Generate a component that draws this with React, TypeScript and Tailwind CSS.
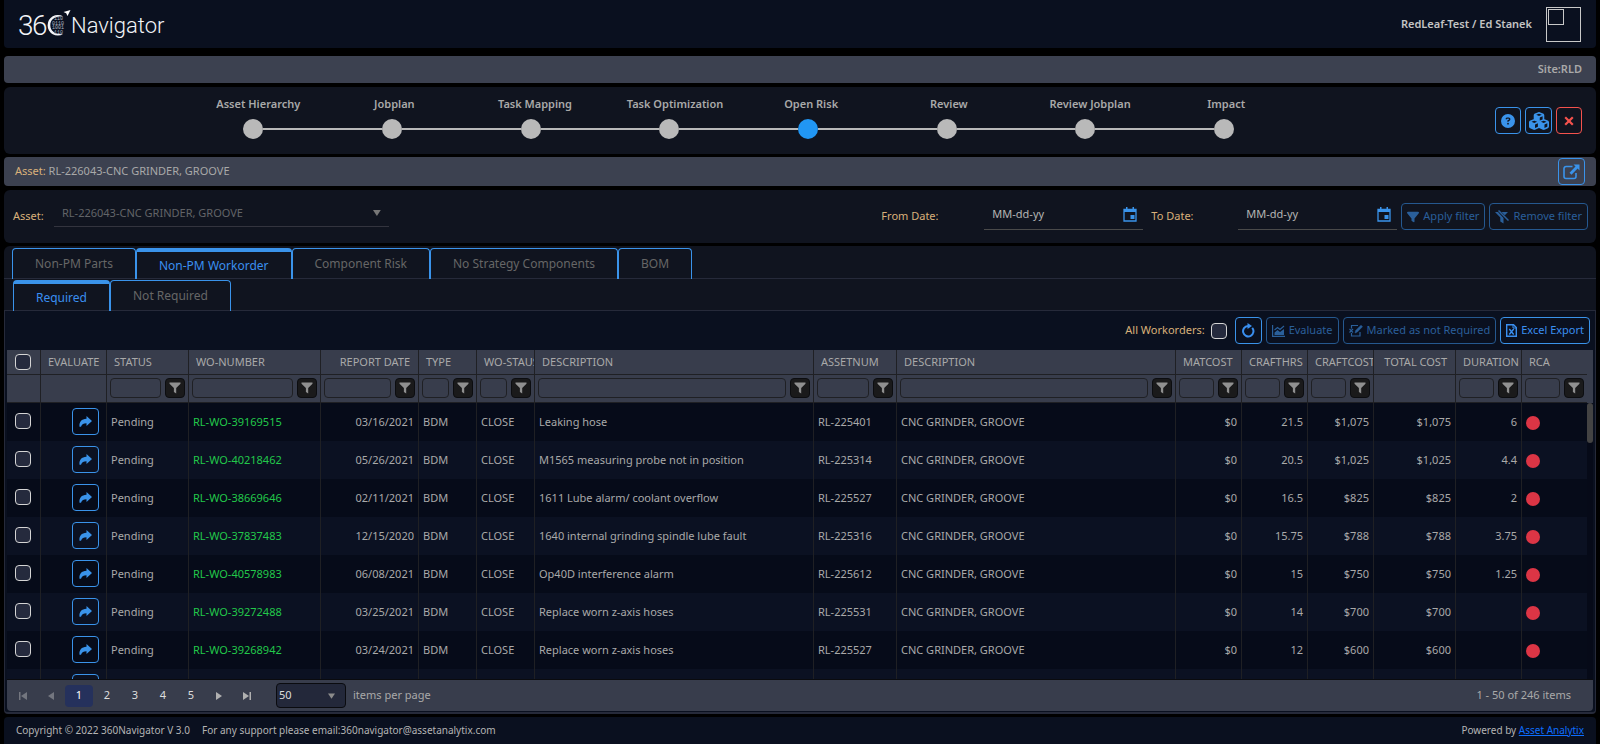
import type { ReactNode } from "react";
import { FaCircleQuestion, FaCubes, FaFilter } from "react-icons/fa6";

type Align = "left" | "right";
type Column = {
  title: string;
  width: string;
  align?: Align;
  filter?: boolean;
};

const columns: Column[] = [
  { title: "", width: "w-[33px]" },
  { title: "EVALUATE", width: "w-[66px]" },
  { title: "STATUS", width: "w-[82px]", filter: true },
  { title: "WO-NUMBER", width: "w-[132px]", filter: true },
  { title: "REPORT DATE", width: "w-[98px]", align: "right", filter: true },
  { title: "TYPE", width: "w-[58px]", filter: true },
  { title: "WO-STAUS", width: "w-[58px]", filter: true },
  { title: "DESCRIPTION", width: "", filter: true },
  { title: "ASSETNUM", width: "w-[83px]", filter: true },
  { title: "DESCRIPTION", width: "", filter: true },
  { title: "MATCOST", width: "w-[66px]", filter: true },
  { title: "CRAFTHRS", width: "w-[66px]", filter: true },
  { title: "CRAFTCOST", width: "w-[66px]", filter: true },
  { title: "TOTAL COST", width: "w-[82px]", align: "right" },
  { title: "DURATION", width: "w-[66px]", filter: true },
  { title: "RCA", width: "w-[66px]", filter: true },
];

const workorders = [
  ["RL-WO-39169515", "03/16/2021", "Leaking hose", "RL-225401", "21.5", "$1,075", "6"],
  ["RL-WO-40218462", "05/26/2021", "M1565 measuring probe not in position", "RL-225314", "20.5", "$1,025", "4.4"],
  ["RL-WO-38669646", "02/11/2021", "1611 Lube alarm/ coolant overflow", "RL-225527", "16.5", "$825", "2"],
  ["RL-WO-37837483", "12/15/2020", "1640 internal grinding spindle lube fault", "RL-225316", "15.75", "$788", "3.75"],
  ["RL-WO-40578983", "06/08/2021", "Op40D interference alarm", "RL-225612", "15", "$750", "1.25"],
  ["RL-WO-39272488", "03/25/2021", "Replace worn z-axis hoses", "RL-225531", "14", "$700", ""],
  ["RL-WO-39268942", "03/24/2021", "Replace worn z-axis hoses", "RL-225527", "12", "$600", ""],
  ["", "", "", "", "", "", ""],
];

const steps = [
  "Asset Hierarchy",
  "Jobplan",
  "Task Mapping",
  "Task Optimization",
  "Open Risk",
  "Review",
  "Review Jobplan",
  "Impact",
];

const checkboxClass =
  "block size-4 shrink-0 appearance-none rounded-[4px] border border-[#d4d4d4] bg-[#252a3d] checked:bg-[#3a93ea]";

function Logo() {
  return (
    <svg width="150" height="36" viewBox="0 0 150 36" role="img" aria-label="360 Navigator">
      <g fill="#f2f4f8" fontFamily="Roboto, sans-serif" fontWeight="300">
        <text x="0" y="29" fontSize="28">3</text>
        <text x="14" y="29" fontSize="28">6</text>
        <text x="53" y="27" fontSize="22">Navigator</text>
      </g>
      <path d="M45 10.300A10.300 10.300 0 1 0 45 28.200C37 28.500 32.300 25 32.300 19.200C32.300 13.500 37 9.800 45 10.300Z" fill="#f2f4f8" />
      <g fill="#b5bac4" fontFamily="Liberation Mono, monospace" fontSize="5">
        <text x="36" y="14">110</text>
        <text x="34" y="18.500">0110</text>
        <text x="34" y="23">1001</text>
        <text x="36" y="27.500">110</text>
      </g>
      <path d="M52.500 4L45.500 6L48.200 7.300L49.500 10Z" fill="#ffffff" />
    </svg>
  );
}

function CalendarIcon() {
  return (
    <svg width="14" height="15" viewBox="0 0 14 15" aria-hidden="true">
      <path d="M1 2.500h12v11.500H1z" fill="none" stroke="#3a93ea" strokeWidth="1.300" />
      <path d="M1 3h12v2H1zM3 0h1.500v3H3zM9.500 0H11v3H9.500zM7.500 8h4v4h-4z" fill="#3a93ea" />
    </svg>
  );
}

function FilterIcon() {
  return (
    <svg width="12" height="12" viewBox="0 0 12 12" aria-hidden="true">
      <path d="M0.500 0.500h11v1.300L7.200 6V11.500L4.900 10V6L0.500 1.800z" fill="currentColor" />
    </svg>
  );
}

function FilterOffIcon() {
  return (
    <svg width="14" height="14" viewBox="0 0 14 14" aria-hidden="true">
      <path d="M0 2h3l5.500 6v5.500L5.300 11.500V7.500zM6.500 2H13L9.800 5.200z" fill="currentColor" />
      <path d="M3.500 0.500L13.500 10.500" stroke="currentColor" strokeWidth="1.500" />
    </svg>
  );
}

function RefreshIcon() {
  return (
    <svg width="14" height="15" viewBox="0 0 14 15" aria-hidden="true">
      <path d="M11.200 4.800A5.200 5.200 0 1 1 7 3" fill="none" stroke="currentColor" strokeWidth="2" />
      <path d="M6.500 0L11 3L6.500 6z" fill="currentColor" />
    </svg>
  );
}

function ShareIcon() {
  return (
    <svg width="13" height="11" viewBox="0 0 13 11" aria-hidden="true">
      <path d="M7.500 0L13 5L7.500 10V7.200C4.500 7.200 3 8 2 10.800H0.500C0 6 2.500 3 7.500 2.800z" fill="currentColor" />
    </svg>
  );
}

function CloseIcon() {
  return (
    <svg width="10" height="10" viewBox="0 0 10 10" aria-hidden="true">
      <path d="M1.200 1.200L8.800 8.800M8.800 1.200L1.200 8.800" stroke="currentColor" strokeWidth="2.200" />
    </svg>
  );
}

function ChartIcon() {
  return (
    <svg width="13" height="12" viewBox="0 0 13 12" aria-hidden="true">
      <path d="M0.600 0V11.400H13" fill="none" stroke="currentColor" strokeWidth="1.200" />
      <path d="M2.500 10V7.500L5.500 5L8 7L12 4V10z" fill="currentColor" />
      <path d="M2.500 5L5.500 2.500L8 4.500L12 1" fill="none" stroke="currentColor" strokeWidth="1.200" />
    </svg>
  );
}

function MarkIcon() {
  return (
    <svg width="14" height="13" viewBox="0 0 14 13" fill="none" stroke="currentColor" aria-hidden="true">
      <path d="M2.500 4.500V1.500H9M2.500 9v3h8.500V8" strokeWidth="1.200" />
      <path d="M0.500 5L4 8.500M4 5L0.500 8.500" strokeWidth="1.200" />
      <path d="M6 9l0.700-2.500L12 1.200l1.500 1.500L8.300 8z" fill="currentColor" strokeWidth="0.500" />
    </svg>
  );
}

function ExcelIcon() {
  return (
    <svg width="11" height="13" viewBox="0 0 11 13" fill="none" stroke="currentColor" aria-hidden="true">
      <path d="M0.700 0.700H7.500L10.300 3.500V12.300H0.700z" strokeWidth="1.400" />
      <path d="M7 0.700V4H10.300" strokeWidth="1" />
      <path d="M3.300 5L7.700 10.500M7.700 5L3.300 10.500" strokeWidth="1.400" />
    </svg>
  );
}

function OpenIcon() {
  return (
    <svg width="17" height="16" viewBox="0 0 17 16" aria-hidden="true">
      <path d="M9.500 2.500H3A2 2 0 0 0 1 4.500V12.500A2 2 0 0 0 3 14.500H11A2 2 0 0 0 13 12.500V9" fill="none" stroke="#3a93ea" strokeWidth="1.600" />
      <path d="M10.500 0.500H16.500V6.500L14.600 4.600L8.500 10.700L6.500 8.700L12.500 2.500z" fill="#3a93ea" />
    </svg>
  );
}

function OutlineButton({ children, disabled = false }: { children: ReactNode; disabled?: boolean }) {
  return (
    <button
      type="button"
      disabled={disabled}
      className="flex h-[27px] items-center gap-1 rounded border border-[#3a93ea] px-[5px] text-[#3a8ff0] disabled:border-[#25588f] disabled:text-[#2a5f9a]"
    >
      {children}
    </button>
  );
}

function Tab({ label, active = false }: { label: string; active?: boolean }) {
  return (
    <button
      type="button"
      role="tab"
      aria-selected={active}
      className={
        active
          ? "h-[31px] rounded-t border-x border-t-4 border-[#3a93ea] px-[22px] text-xs text-[#3a8ff0]"
          : "h-[31px] rounded-t border-x border-t border-[#3a93ea] px-[22px] text-xs text-[#666666]"
      }
    >
      {label}
    </button>
  );
}

function DateField({ label, id }: { label: string; id: string }) {
  return (
    <div className="flex items-center">
      <label htmlFor={id} className="w-[103px] text-[#d9b07a]">
        {label}
      </label>
      <div className="mb-1 flex h-[30px] w-[159px] items-center border-b border-[#4a4a4a] pr-1.5 pl-2">
        <input
          id={id}
          type="text"
          placeholder="MM-dd-yy"
          className="w-full min-w-0 bg-transparent text-[11px] outline-none placeholder:text-[#b4b4b4]"
        />
        <button type="button" aria-label="Open calendar">
          <CalendarIcon />
        </button>
      </div>
    </div>
  );
}

function Columns() {
  return (
    <colgroup>
      {columns.map((c, i) => (
        <col key={i} className={c.width} />
      ))}
    </colgroup>
  );
}

function PagerIcon({ d }: { d: string }) {
  return (
    <svg width="10" height="10" viewBox="0 0 10 10" fill="currentColor" aria-hidden="true">
      <path d={d} />
    </svg>
  );
}

const cell = "overflow-hidden border-l border-[#1f2024] px-1 whitespace-nowrap";

export default function App() {
  return (
    <div className="flex h-screen min-h-[480px] flex-col bg-black px-1 font-['Noto_Sans',sans-serif] text-[11px] text-[#a9a9a9]">
      <header className="flex h-12 shrink-0 items-center justify-between rounded-b bg-[#0a101f] pr-[15px] pl-[14px]">
        <Logo />
        <div className="flex items-center gap-3.5">
          <span className="font-semibold text-[#c4c4c4]">RedLeaf-Test / Ed Stanek</span>
          <button type="button" aria-label="Profile" className="flex size-[35px] items-start border border-[#c8c8c8] p-px">
            <span className="block size-4 border border-[#c8c8c8]" />
          </button>
        </div>
      </header>

      <div className="mt-2 flex h-[27px] shrink-0 items-center justify-end rounded bg-[#3c4150] pr-[14px] font-semibold">
        Site:RLD
      </div>

      <section className="mt-1 flex h-[67px] shrink-0 items-center rounded-md bg-[#10141f] pr-[14px]">
        <ol className="ml-[11.400%] flex w-[70.300%] pb-1.5">
          {steps.map((step, i) => (
            <li key={step} className="flex flex-1 flex-col items-center gap-1.5">
              <span className="translate-x-[6%] font-semibold whitespace-nowrap">{step}</span>
              <div className="flex w-full items-center">
                <span className={i === 0 ? "h-0.5 flex-1" : "h-0.5 flex-1 bg-[#b9b9b9]"} />
                <span className={step === "Open Risk" ? "size-5 rounded-full bg-[#2196f3]" : "size-5 rounded-full bg-[#b9b9b9]"} />
                <span className={i === steps.length - 1 ? "h-0.5 flex-1" : "h-0.5 flex-1 bg-[#b9b9b9]"} />
              </div>
            </li>
          ))}
        </ol>
        <div className="ml-auto flex gap-1">
          <button type="button" aria-label="Help" className="grid h-[27px] w-[26px] place-items-center rounded border border-[#3a93ea] text-[#3a93ea]">
            <FaCircleQuestion size={14} />
          </button>
          <button type="button" aria-label="Assets" className="grid size-[27px] place-items-center rounded border border-[#3a93ea] text-[#3a93ea]">
            <FaCubes size={20} />
          </button>
          <button type="button" aria-label="Close" className="grid h-[27px] w-[26px] place-items-center rounded border border-[#f4524d] text-[#f4524d]">
            <CloseIcon />
          </button>
        </div>
      </section>

      <div className="mt-[3px] flex h-[29px] shrink-0 items-center justify-between rounded bg-[#3c4150] pr-[11px] pl-[11px]">
        <p>
          <span className="text-[#d9b07a]">Asset:</span> RL-226043-CNC GRINDER, GROOVE
        </p>
        <button type="button" aria-label="Open asset" className="grid size-[27px] place-items-center rounded border border-[#3a93ea]">
          <OpenIcon />
        </button>
      </div>

      <section className="mt-1 flex h-[53px] shrink-0 items-center rounded-md bg-[#10141f] pr-2 pl-[9px]">
        <label htmlFor="asset" className="w-[41px] text-[#d9b07a]">
          Asset:
        </label>
        <div className="mb-1.5 flex h-[26px] w-[335px] items-center border-b border-[#33343e] pr-2 pl-2">
          <select id="asset" disabled className="w-full appearance-none bg-transparent text-[#626468] opacity-100">
            <option>RL-226043-CNC GRINDER, GROOVE</option>
          </select>
          <svg width="8" height="6" viewBox="0 0 8 6" aria-hidden="true">
            <path d="M0 0h8L4 6z" fill="#777777" />
          </svg>
        </div>
        <div className="ml-auto flex items-center gap-2">
          <DateField label="From Date:" id="from-date" />
          <div className="flex items-center gap-1">
            <div className="[&_label]:w-[87px]">
              <DateField label="To Date:" id="to-date" />
            </div>
            <OutlineButton disabled>
              <FaFilter size={12} />
              Apply filter
            </OutlineButton>
            <OutlineButton disabled>
              <FilterOffIcon />
              Remove filter
            </OutlineButton>
          </div>
        </div>
      </section>

      <main className="mt-[3px] flex min-h-0 flex-1 flex-col rounded-md bg-[#10141f] pt-0.5">
        <div role="tablist" className="flex border-b border-[#262a3a] pl-2 [&>button]:-mb-px">
          <Tab label="Non-PM Parts" />
          <Tab label="Non-PM Workorder" active />
          <Tab label="Component Risk" />
          <Tab label="No Strategy Components" />
          <Tab label="BOM" />
        </div>
        <div role="tablist" className="mt-px flex border-b border-[#262a3a] pl-[9px] [&>button]:-mb-px">
          <Tab label="Required" active />
          <Tab label="Not Required" />
        </div>

        <div className="flex min-h-0 flex-1 flex-col rounded-b border-x border-b-2 border-[#262a3a] bg-[#0a101f] px-0.5 pb-px">
          <div className="flex h-[39px] shrink-0 items-center justify-end gap-1 pr-[3px]">
            <label htmlFor="all-workorders" className="pr-0.5 text-[#d9b07a]">
              All Workorders:
            </label>
            <input id="all-workorders" type="checkbox" className={checkboxClass} />
            <span className="w-0" />
            <button type="button" aria-label="Refresh" className="grid size-[27px] place-items-center rounded border border-[#3a93ea] text-[#3a8ff0]">
              <RefreshIcon />
            </button>
            <OutlineButton disabled>
              <ChartIcon />
              Evaluate
            </OutlineButton>
            <OutlineButton disabled>
              <MarkIcon />
              Marked as not Required
            </OutlineButton>
            <OutlineButton>
              <ExcelIcon />
              Excel Export
            </OutlineButton>
          </div>

          <div className="shrink-0 bg-[#383d4c] pr-[6px]">
            <table className="w-full table-fixed border-separate border-spacing-0">
              <Columns />
              <thead>
                <tr className="h-[25px]">
                  {columns.map((c, i) => (
                    <th
                      key={i}
                      className={
                        c.align === "right"
                          ? "overflow-hidden border-b border-l border-[#1f2024] pr-2 text-right font-normal whitespace-nowrap"
                          : "overflow-hidden border-b border-l border-[#1f2024] pl-[7px] text-left font-normal whitespace-nowrap first:border-l-0"
                      }
                    >
                      {i === 0 ? <input type="checkbox" aria-label="Select all" className={checkboxClass + " ml-px"} /> : c.title}
                    </th>
                  ))}
                </tr>
                <tr className="h-7">
                  {columns.map((c, i) => (
                    <td key={i} className="border-b border-l border-[#1f2024] px-[3px] pb-px first:border-l-0">
                      {c.filter && (
                        <div className="flex gap-1">
                          <input
                            type="text"
                            aria-label={"Filter " + c.title}
                            className="h-5 w-full min-w-0 rounded border border-[#1f2024] bg-transparent px-1"
                          />
                          <button
                            type="button"
                            aria-label={"Filter options for " + c.title}
                            className="grid size-5 shrink-0 place-items-center rounded border border-[#0c0d10] bg-[#1a1a1b] text-[#909090]"
                          >
                            <FilterIcon />
                          </button>
                        </div>
                      )}
                    </td>
                  ))}
                </tr>
              </thead>
            </table>
          </div>

          <div className="flex min-h-0 flex-1 items-start overflow-hidden bg-[#060a18]">
            <table className="w-full table-fixed border-separate border-spacing-0">
              <Columns />
              <tbody>
                {workorders.map(([wo, date, description, asset, hours, cost, duration], i) => (
                  <tr key={i} className="h-[38px] odd:bg-[#060b19] even:bg-[#0b1122]">
                    <td className="pl-2">
                      <input type="checkbox" aria-label={"Select " + wo} className={checkboxClass + " mb-0.5"} />
                    </td>
                    <td className={cell}>
                      <button
                        type="button"
                        aria-label={"Evaluate " + wo}
                        className="mr-[3px] mb-px ml-auto grid size-[27px] place-items-center rounded border border-[#3a93ea] text-[#3a93ea]"
                      >
                        <ShareIcon />
                      </button>
                    </td>
                    <td className={cell}>{wo && "Pending"}</td>
                    <td className={cell + " text-[#22c84a]"}>{wo}</td>
                    <td className={cell + " text-right"}>{date}</td>
                    <td className={cell}>{wo && "BDM"}</td>
                    <td className={cell}>{wo && "CLOSE"}</td>
                    <td className={cell}>{description}</td>
                    <td className={cell}>{asset}</td>
                    <td className={cell}>{wo && "CNC GRINDER, GROOVE"}</td>
                    <td className={cell + " text-right"}>{wo && "$0"}</td>
                    <td className={cell + " text-right"}>{hours}</td>
                    <td className={cell + " text-right"}>{cost}</td>
                    <td className={cell + " text-right"}>{cost}</td>
                    <td className={cell + " text-right"}>{duration}</td>
                    <td className={cell}>
                      {wo && <span className="mt-0.5 block size-3.5 rounded-full bg-[#dc3545]" />}
                    </td>
                  </tr>
                ))}
              </tbody>
            </table>
            <div className="w-[6px] shrink-0">
              <div className="h-10 rounded-full bg-[#434343]" />
            </div>
          </div>

          <nav aria-label="Pages" className="flex h-8 shrink-0 items-center rounded-b border-t border-[#0a0b0f] bg-[#383d4c] pr-[22px] pl-0.5 text-[#dddddd]">
            <button type="button" aria-label="First page" disabled className="grid h-[22px] w-7 place-items-center text-[#73767f]">
              <PagerIcon d="M1 1h1.500v8H1zM9 1v8L3 5z" />
            </button>
            <button type="button" aria-label="Previous page" disabled className="grid h-[22px] w-7 place-items-center text-[#73767f]">
              <PagerIcon d="M8 1v8L2 5z" />
            </button>
            {["1", "2", "3", "4", "5"].map((n) => (
              <button
                key={n}
                type="button"
                className={n === "1" ? "h-[22px] w-7 rounded bg-[#25315c] text-white" : "h-[22px] w-7"}
              >
                {n}
              </button>
            ))}
            <button type="button" aria-label="Next page" className="grid h-[22px] w-7 place-items-center text-[#b0b0b0]">
              <PagerIcon d="M2 1v8L8 5z" />
            </button>
            <button type="button" aria-label="Last page" className="grid h-[22px] w-7 place-items-center text-[#b0b0b0]">
              <PagerIcon d="M1 1v8L7 5zM7.500 1H9v8H7.500z" />
            </button>
            <div className="ml-[15px] flex h-[25px] w-[70px] items-center rounded border border-[#0a0b0f] bg-[#23283a] pr-2.5 pl-0.5">
              <select id="page-size" className="w-full appearance-none bg-transparent text-[11px]">
                <option>50</option>
              </select>
              <svg width="8" height="6" viewBox="0 0 8 6" aria-hidden="true">
                <path d="M0 0h8L4 6z" fill="#8b8b8b" />
              </svg>
            </div>
            <label htmlFor="page-size" className="pl-[7px] text-[#a9a9a9]">
              items per page
            </label>
            <span className="ml-auto text-[#a9a9a9]">1 - 50 of 246 items</span>
          </nav>
        </div>
      </main>

      <footer className="mt-[3px] flex h-[27px] shrink-0 items-center justify-between rounded-t bg-[#0a101f] px-3 text-[10px] text-[#b4b4b4]">
        <p className="flex gap-3">
          <span>Copyright © 2022 360Navigator V 3.0</span>
          <span>For any support please email:360navigator@assetanalytix.com</span>
        </p>
        <p>
          Powered by{" "}
          <a href="#asset-analytix" className="text-[#0d6efd] underline">
            Asset Analytix
          </a>
        </p>
      </footer>
    </div>
  );
}
